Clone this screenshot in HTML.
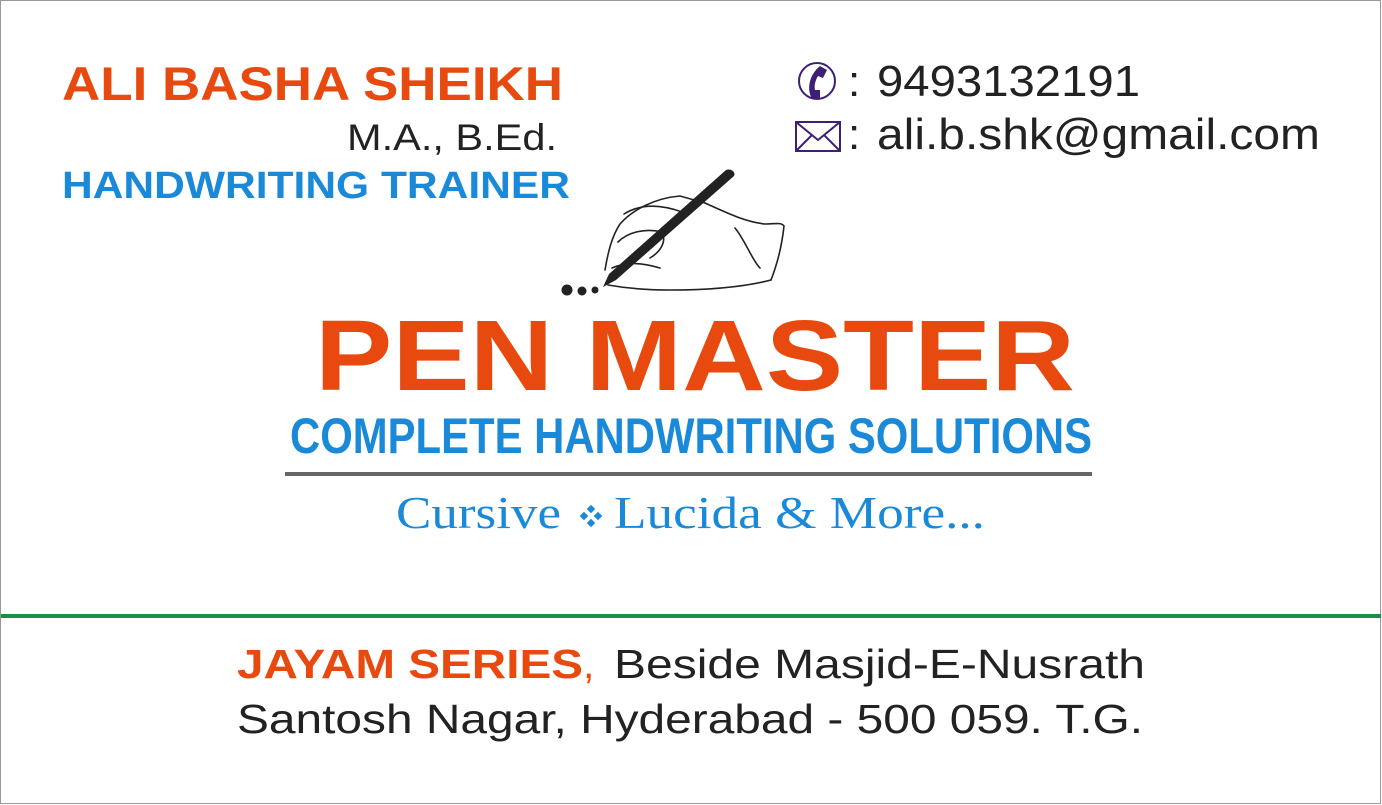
<!DOCTYPE html>
<html><head><meta charset="utf-8"><style>
html,body{margin:0;padding:0;background:#fff;}
svg{display:block;}
</style></head><body>
<svg width="1382" height="805" viewBox="0 0 1382 805" xmlns="http://www.w3.org/2000/svg">
<rect x="0.5" y="0.5" width="1380" height="803" fill="#fff" stroke="#999" stroke-width="1"/>
<g font-family="Liberation Sans, sans-serif">
<text x="62" y="100" font-size="47" font-weight="bold" fill="#e8490f" textLength="501" lengthAdjust="spacingAndGlyphs">ALI BASHA SHEIKH</text>
<text x="347" y="150" font-size="37" fill="#222" textLength="210" lengthAdjust="spacingAndGlyphs">M.A., B.Ed.</text>
<text x="62" y="198" font-size="38" font-weight="bold" fill="#1a8ad8" textLength="508" lengthAdjust="spacingAndGlyphs">HANDWRITING TRAINER</text>
<text x="848" y="96" font-size="44" fill="#222">:</text>
<text x="877" y="96" font-size="44" fill="#222" textLength="263" lengthAdjust="spacingAndGlyphs">9493132191</text>
<text x="848" y="149" font-size="44" fill="#222">:</text>
<text x="877" y="149" font-size="44" fill="#222" textLength="443" lengthAdjust="spacingAndGlyphs">ali.b.shk@gmail.com</text>
<text x="315" y="390" font-size="100" font-weight="bold" fill="#e8490f" textLength="760" lengthAdjust="spacingAndGlyphs">PEN MASTER</text>
<text x="290" y="453" font-size="50" font-weight="bold" fill="#1a8ad8" textLength="802" lengthAdjust="spacingAndGlyphs">COMPLETE HANDWRITING SOLUTIONS</text>
<text x="237" y="678" font-size="41" font-weight="bold" fill="#e8490f" textLength="346" lengthAdjust="spacingAndGlyphs">JAYAM SERIES</text>
<text x="583" y="678" font-size="41" fill="#e8490f">,</text>
<text x="614" y="678" font-size="41" fill="#222" textLength="531" lengthAdjust="spacingAndGlyphs">Beside Masjid-E-Nusrath</text>
<text x="237" y="733" font-size="41" fill="#222" textLength="906" lengthAdjust="spacingAndGlyphs">Santosh Nagar, Hyderabad - 500 059. T.G.</text>
</g>
<g font-family="Liberation Serif, serif" font-size="46" fill="#1a8ad8">
<text x="396" y="528" textLength="165" lengthAdjust="spacingAndGlyphs">Cursive</text>
<text x="614" y="528" textLength="371" lengthAdjust="spacingAndGlyphs">Lucida &amp; More...</text>
</g>
<g fill="#1a8ad8">
<rect x="588" y="506" width="6" height="6" transform="rotate(45 591 509)"/>
<rect x="588" y="520" width="6" height="6" transform="rotate(45 591 523)"/>
<rect x="581" y="513" width="6" height="6" transform="rotate(45 584 516)"/>
<rect x="595" y="513" width="6" height="6" transform="rotate(45 598 516)"/>
</g>
<rect x="285" y="472" width="807" height="4" fill="#666"/>
<rect x="1" y="614" width="1380" height="4" fill="#1a8f4a"/>
<!-- phone icon -->
<circle cx="817" cy="81" r="18" fill="none" stroke="#3d1f73" stroke-width="2"/>
<path d="M820 66 l7 4 -4 8 -5 -2 c-3 5 -4 10 -3 14 l5 0 0 9 -8 0 c-6 -11 -2 -25 8 -33z" fill="#3d1f73"/>
<!-- mail icon -->
<rect x="796" y="122" width="44" height="29" fill="none" stroke="#3d1f73" stroke-width="2"/>
<path d="M796 122 L818 140 L840 122 M796 151 L812 135 M840 151 L824 135" fill="none" stroke="#3d1f73" stroke-width="2"/>
<!-- hand & pen -->
<g fill="none" stroke="#222" stroke-width="1.6" stroke-linecap="round">
<path d="M605 270 C608 252 612 236 620 224 C632 210 655 198 680 196 L705 203"/>
<path d="M705 203 C725 212 745 222 765 224 C775 224 781 222 784 226 C782 245 778 262 771 280"/>
<path d="M771 280 C740 288 700 290 670 290 C645 290 625 288 608 285"/>
<path d="M618 242 C628 232 645 228 662 232 C667 242 660 252 650 258"/>
<path d="M624 214 C640 204 660 204 682 212"/>
<path d="M612 268 C625 262 640 262 660 268"/>
<path d="M735 228 C745 240 752 260 760 268"/>
</g>
<path d="M726 170 C731 168 736 172 734 176 L616 280 L603 287 L609 274 Z" fill="#222"/>
<circle cx="567" cy="290" r="5.5" fill="#222"/>
<circle cx="582" cy="291" r="4.5" fill="#222"/>
<circle cx="595" cy="290" r="3.5" fill="#222"/>
</svg>
</body></html>
